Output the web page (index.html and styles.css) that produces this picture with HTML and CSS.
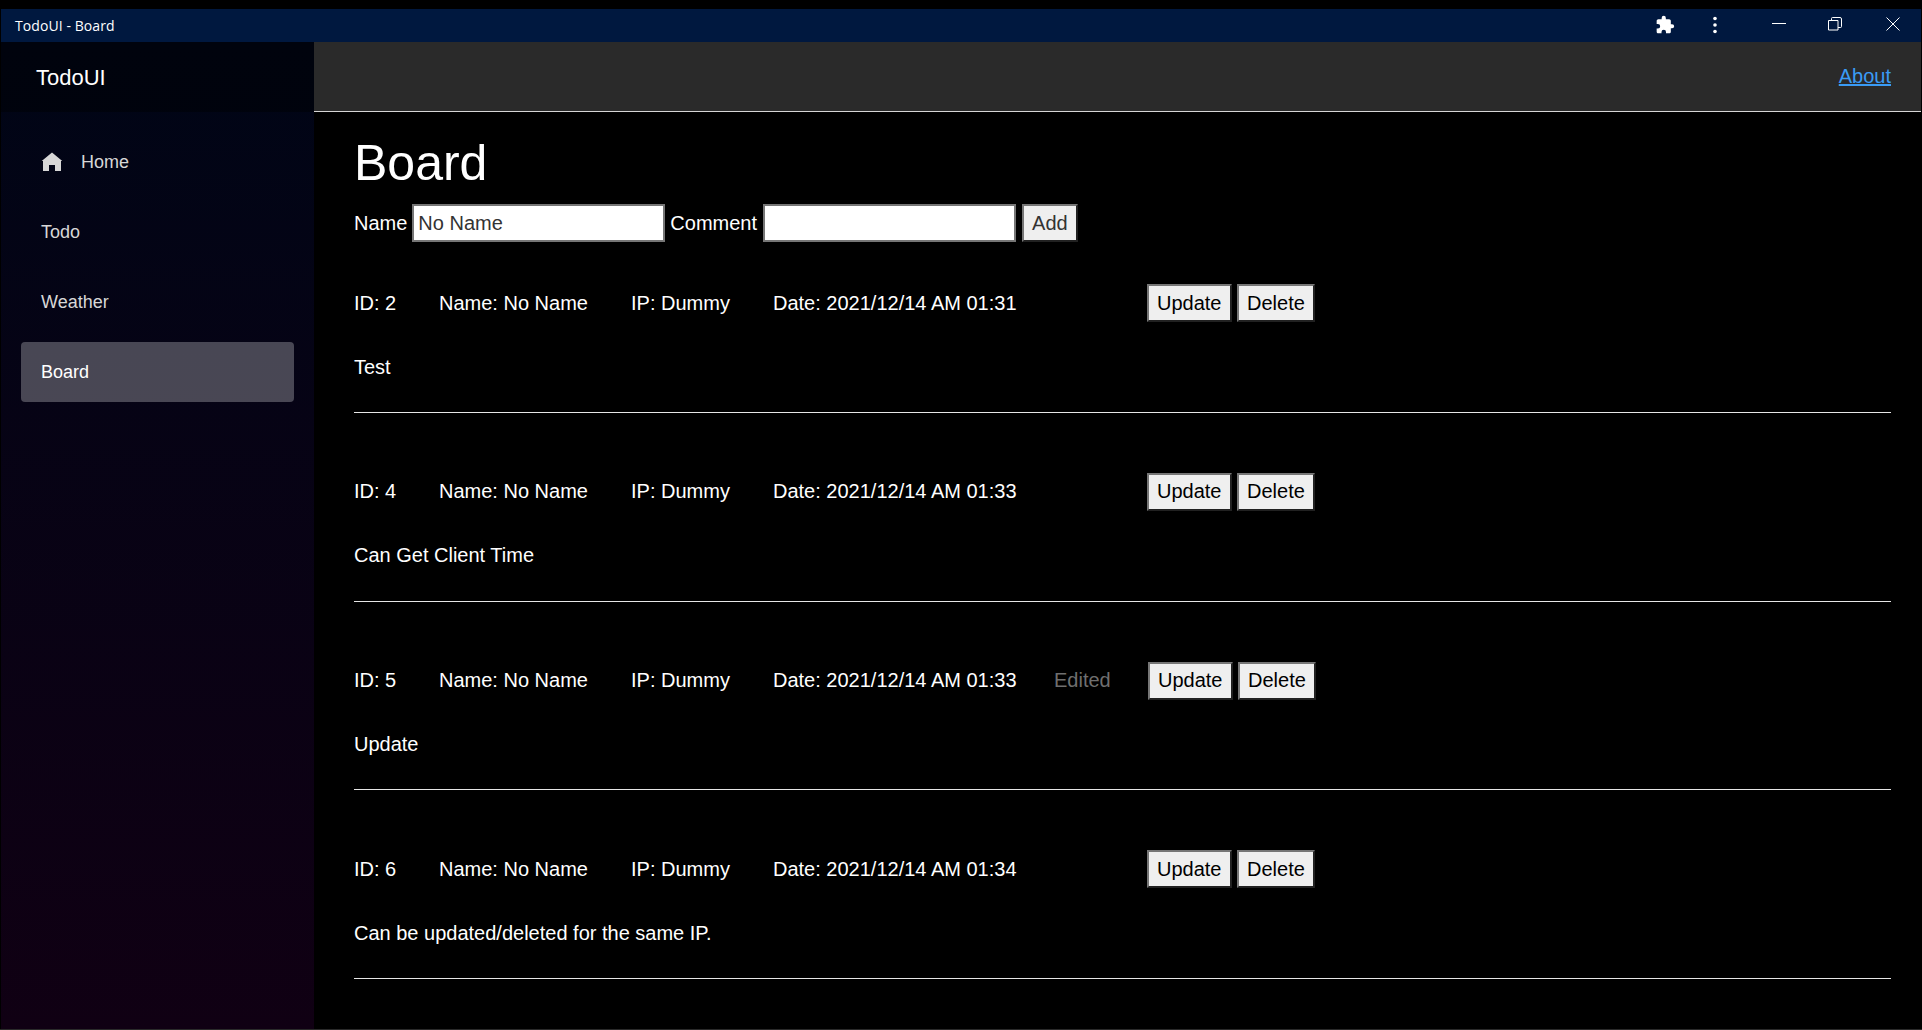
FILE: index.html
```html
<!DOCTYPE html>
<html lang="en">
<head>
<meta charset="utf-8">
<title>TodoUI - Board</title>
<link rel="stylesheet" href="styles.css">
</head>
<body>
<div class="window">
  <header class="titlebar">
    <span class="wintitle">TodoUI - Board</span>
    <div class="winicons">
      <svg class="ic-puzzle" width="20" height="20" viewBox="0 0 24 24"><path fill="#fff" d="M20.5 11H19V7c0-1.1-.9-2-2-2h-4V3.5a2.5 2.5 0 0 0-5 0V5H4c-1.1 0-2 .9-2 2v3.8h1.5a2.7 2.7 0 0 1 0 5.4H2V20c0 1.100.9 2 2 2h3.800v-1.500a2.700 2.700 0 0 1 5.400 0V22H17c1.100 0 2-.9 2-2v-4h1.500a2.500 2.500 0 0 0 0-5z"/></svg>
      <svg class="ic-dots" width="6" height="18" viewBox="0 0 6 18"><circle cx="3" cy="2.500" r="1.800" fill="#fff"/><circle cx="3" cy="9" r="1.800" fill="#fff"/><circle cx="3" cy="15.500" r="1.800" fill="#fff"/></svg>
      <svg class="ic-min" width="14" height="14" viewBox="0 0 14 14"><path d="M0 6.500h14" stroke="#fff" stroke-width="1"/></svg>
      <svg class="ic-max" width="14" height="14" viewBox="0 0 14 14"><path d="M.5 3.500h9.500v9.500H.5zM3.500 3.500V1.500a1 1 0 0 1 1-1H12a1.500 1.500 0 0 1 1.500 1.500v7.500a1 1 0 0 1-1 1H10" fill="none" stroke="#fff" stroke-width="1"/></svg>
      <svg class="ic-close" width="14" height="14" viewBox="0 0 14 14"><path d="M.5.500l13 13M13.500.500l-13 13" stroke="#fff" stroke-width="1"/></svg>
    </div>
  </header>
  <div class="app">
    <aside class="sidebar">
      <div class="brand">TodoUI</div>
      <nav class="nav">
        <a class="nav-item"><svg class="home" width="22" height="20" viewBox="0 0 22 20"><path fill="#d7d7d7" d="M11 .5L.7 9H2V19H8V13H14V19H20V9H21.300z"/></svg>Home</a>
        <a class="nav-item">Todo</a>
        <a class="nav-item">Weather</a>
        <a class="nav-item active">Board</a>
      </nav>
    </aside>
    <main class="main">
      <div class="topbar"><a class="about">About</a></div>
      <section class="content">
        <h1 class="heading">Board</h1>
        <form class="addform">
          <label>Name</label>
          <input class="field" value="No Name">
          <label>Comment</label>
          <input class="field field-comment">
          <button class="btn" type="button">Add</button>
        </form>
        <article class="post">
          <div class="meta"><span class="m-id">ID: 2</span><span class="m-name">Name: No Name</span><span class="m-ip">IP: Dummy</span><span class="m-date">Date: 2021/12/14 AM 01:31</span><span class="m-edited"></span><button class="btn" type="button">Update</button><button class="btn" type="button">Delete</button></div>
          <p class="comment">Test</p>
        </article>
        <article class="post">
          <div class="meta"><span class="m-id">ID: 4</span><span class="m-name">Name: No Name</span><span class="m-ip">IP: Dummy</span><span class="m-date">Date: 2021/12/14 AM 01:33</span><span class="m-edited"></span><button class="btn" type="button">Update</button><button class="btn" type="button">Delete</button></div>
          <p class="comment">Can Get Client Time</p>
        </article>
        <article class="post">
          <div class="meta"><span class="m-id">ID: 5</span><span class="m-name">Name: No Name</span><span class="m-ip">IP: Dummy</span><span class="m-date">Date: 2021/12/14 AM 01:33</span><span class="m-edited">Edited</span><button class="btn" type="button">Update</button><button class="btn" type="button">Delete</button></div>
          <p class="comment">Update</p>
        </article>
        <article class="post">
          <div class="meta"><span class="m-id">ID: 6</span><span class="m-name">Name: No Name</span><span class="m-ip">IP: Dummy</span><span class="m-date">Date: 2021/12/14 AM 01:34</span><span class="m-edited"></span><button class="btn" type="button">Update</button><button class="btn" type="button">Delete</button></div>
          <p class="comment">Can be updated/deleted for the same IP.</p>
        </article>
      </section>
    </main>
  </div>
</div>
</body>
</html>
```
FILE: styles.css
```css
* { box-sizing: border-box; }
html, body { margin: 0; height: 100%; background: #000; overflow: hidden; }
body { font-family: "Liberation Sans", Arial, sans-serif; color: #fff; }
.window { height: 100%; padding: 9px 1px 0 1px; display: flex; flex-direction: column; border-bottom: 1px solid #2a2a2a; }
.titlebar { height: 33px; background: #00183f; display: flex; align-items: center; justify-content: space-between; flex: none; }
.wintitle { font-family: "Open Sans", "Liberation Sans", sans-serif; font-size: 14px; letter-spacing: .08px; padding-left: 14px; color: #fff; }
.winicons { display: flex; align-items: center; }
.ic-puzzle { margin-right: 37px; margin-top: -1px; }
.ic-dots { margin-right: 54px; margin-top: -1px; }
.ic-min { margin-right: 42px; margin-top: -3px; }
.ic-max { margin-right: 44px; margin-top: -3px; }
.ic-close { margin-right: 21px; margin-top: -3px; }
.app { flex: 1; display: flex; min-height: 0; }
.sidebar { width: 313px; flex: none; background: linear-gradient(180deg, #000516 0%, #100013 100%); }
.brand { height: 70px; background: rgba(0,0,0,.4); display: flex; align-items: center; padding: 1px 0 0 35px; font-size: 22px; }
.nav { padding-top: 15px; display: flex; flex-direction: column; }
.nav-item { height: 60px; margin: 5px 20px; padding-left: 20px; border-radius: 4px; display: flex; align-items: center; font-size: 18px; color: #d7d7d7; }
.nav-item.active { background: rgba(255,255,255,.27); color: #fff; }
.home { margin-right: 18px; }
.main { flex: 1; min-width: 0; display: flex; flex-direction: column; }
.topbar { height: 70px; background: #2a2a2a; border-bottom: 1px solid #d6d5d5; display: flex; align-items: center; justify-content: flex-end; padding-right: 30px; flex: none; }
.about { color: #3a9bf5; text-decoration: underline; font-size: 20px; }
.content { padding: 21px 30px 0 40px; }
.heading { margin: 0; font-weight: 400; font-size: 50px; line-height: 60px; }
.addform { display: flex; align-items: center; gap: 5px; font-size: 20px; margin-top: 11px; }
.field { width: 253px; height: 38px; border: 2px solid #767676; background: #fff; color: #333; font: inherit; padding: 1px 3px 1px 4px; }
.field-comment { margin-left: 1px; }
.btn { height: 38px; padding: 0 8px; border: 2px outset #767676; background: #efefef; color: #000; font: inherit; border-radius: 0; }
.addform .btn { color: #333; margin-left: 1px; }
.post { height: 171px; padding-top: 42.4px; margin-bottom: 17.6px; border-bottom: 1px solid #e6e6e6; }
.meta { display: flex; align-items: center; font-size: 20px; height: 38px; }
.m-id { width: 85px; }
.m-name { width: 192px; }
.m-ip { width: 142px; }
.m-date { width: 281px; }
.m-edited { width: 94px; color: #6f6f6f; }
.m-edited:empty { width: 93px; }
.meta .btn + .btn { margin-left: 5.56px; }
.comment { margin: 33.4px 0 0; font-size: 20px; line-height: 23px; }
```
